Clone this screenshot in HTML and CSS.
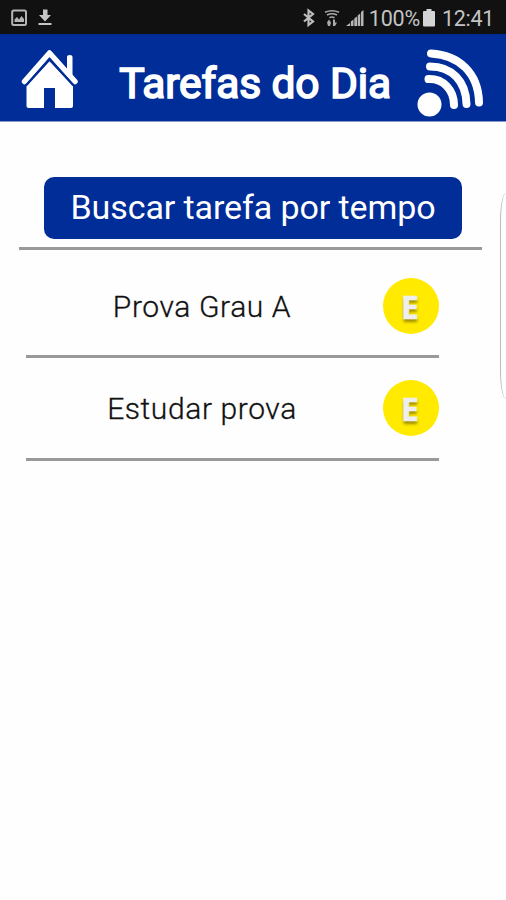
FILE: index.html
```html
<!DOCTYPE html>
<html lang="pt-BR">
<head>
    <meta charset="UTF-8">
    <title>Tarefas do Dia</title>
    <link rel="stylesheet" href="styles.css">
</head>
<body>
    <!-- Barra de status -->
    <div class="status-bar">
        <svg class="status-left" width="42" height="18" viewBox="0 0 42 18">
            <rect x="1.2" y="1.5" width="13.8" height="14.5" rx="1.5" fill="none" stroke="#b5b5b5" stroke-width="2"/>
            <path d="M3.5 13V10.5l2.5-2.500 2 2.500 2.500-3.500 2.500 3v3z" fill="#b5b5b5"/>
            <path d="M32 .5h4.500v5.500H40l-6 6.500-6-6.500h4zM27.500 14h13v2h-13z" fill="#c5c5c5"/>
        </svg>
        <div class="status-right">
            <svg width="66" height="20" viewBox="0 0 66 20">
                <path d="M1 6l9 7.500-4.500 3.500V2.500L10 6l-9 7.500" fill="none" stroke="#bdbdbd" stroke-width="2.200"/>
                <path d="M22 4.200q7-3 14 0M24 7q5-2.500 10 0M26.500 9.800q2.500-1.500 5 0" fill="none" stroke="#aaa" stroke-width="1.600"/>
                <path d="M24 14.500l2-3 2 3-1 3.500h-2zM30 11.500h2v3h2l-2 3.500h-2z" fill="#aaa"/>
                <path d="M43 18l4-3v3zM47.800 18v-4.500l2.700-2V18zM51.300 18v-7.500l2.700-2V18zM54.700 18V7.500l2.500-2V18zM58 18V4l2.500-2v16z" fill="#b5b5b5"/>
            </svg>
            <span class="battery-text">100%</span>
            <svg width="12" height="18" viewBox="0 0 12 18">
                <path d="M3.500 0h5v2H11q1 0 1 1v13.500q0 1-1 1H1q-1 0-1-1V3q0-1 1-1h2.500z" fill="#d4d4d4"/>
            </svg>
            <span class="clock">12:41</span>
        </div>
    </div>

    <header class="header">
        <svg class="home-icon" width="58" height="60" viewBox="0 0 58 60">
            <path d="M46 9v16l5.500 5.500V9q0-2-2.750-2T46 9z" fill="#fff"/>
            <path d="M3.500 33.500L28.500 5 54 33.500" fill="none" stroke="#fff" stroke-width="5.500" stroke-linecap="round" stroke-linejoin="round"/>
            <path d="M5.500 37.500L28.500 13 52 37.500V58q0 2-2 2H34V40H23v20H7.500q-2 0-2-2z" fill="#fff"/>
            <path d="M5 37.500L28.500 11.500 52.500 37.500" fill="none" stroke="#002d98" stroke-width="2.200"/>
        </svg>
        <h1 class="title">Tarefas do Dia</h1>
        <svg class="signal-icon" width="70" height="70" viewBox="0 0 70 70">
            <circle cx="13.500" cy="56.500" r="12" fill="#fff"/>
            <path d="M12.500 31c15-.5 25.500 11 25.500 26M14 18.500c22 0 36 15 36.500 37.500M15 5.500C43 7 62.500 25 63 54.500" fill="none" stroke="#fff" stroke-width="8" stroke-linecap="round"/>
        </svg>
    </header>

    <main class="content">
        <button class="search-btn">Buscar tarefa por tempo</button>
        <hr class="divider">

        <!-- Lista de tarefas -->
        <ul class="task-list">
            <li class="task">
                <span class="task-name">Prova Grau A</span>
                <span class="task-badge">E</span>
            </li>
            <li class="task">
                <span class="task-name">Estudar prova</span>
                <span class="task-badge">E</span>
            </li>
        </ul>
    </main>

    <!-- Painel lateral -->
    <div class="side-panel"></div>
</body>
</html>
```
FILE: styles.css
```css
* {
    box-sizing: border-box;
}

body {
    margin: 0;
    height: 900px;
    position: relative;
    overflow: hidden;
    background: #fefefe;
    font-family: Roboto, "Liberation Sans", sans-serif;
}

.status-bar {
    display: flex;
    justify-content: space-between;
    align-items: center;
    height: 34px;
    padding: 2px 12px 0 11px;
    background: #111;
    color: #c4c4c4;
    font-size: 21.5px;
}

.status-right {
    display: flex;
    align-items: center;
}

.battery-text {
    margin: 0 3px 0 0;
    letter-spacing: -0.2px;
}

.clock {
    margin-left: 7px;
    letter-spacing: -0.3px;
}

.header {
    display: flex;
    align-items: flex-start;
    height: 88px;
    padding: 14px 20px 0 21px;
    background: #002d98;
    border-bottom: 1px solid #8b98c8;
}

.title {
    margin: 10px 25px 0 auto;
    color: #fff;
    font-size: 42.5px;
    line-height: 52px;
    font-weight: 400;
    letter-spacing: -0.1px;
    white-space: nowrap;
    -webkit-text-stroke: 1.7px #fff;
}

.content {
    padding: 55px 24px 0 19px;
}

.search-btn {
    display: block;
    width: 418px;
    height: 62px;
    margin: 0 0 0 25px;
    padding: 0 0 2px;
    border: none;
    border-radius: 10px;
    background: #002d98;
    color: #fff;
    font-family: inherit;
    font-size: 34px;
    line-height: 60px;
    letter-spacing: -0.1px;
    white-space: nowrap;
}

.divider {
    height: 3px;
    margin: 8px 0 0;
    border: none;
    background: #999;
}

.task-list {
    width: 413px;
    margin: 5px 0 0 7px;
    padding: 0;
    list-style: none;
}

.task {
    display: flex;
    align-items: center;
    height: 103px;
    padding-top: 2px;
    border-bottom: 3px solid #999;
}

.task + .task {
    padding-top: 0;
}

.task-name {
    flex: 1;
    padding-right: 5px;
    color: #111;
    font-size: 30px;
    font-weight: 300;
    letter-spacing: 0.6px;
    text-align: center;
    -webkit-text-stroke: 0.3px #111;
}

.task-badge {
    width: 56px;
    height: 56px;
    padding-right: 2px;
    border-radius: 50%;
    background: #ffea00;
    color: #eee;
    font-family: "Open Sans", sans-serif;
    font-size: 32px;
    font-weight: 700;
    line-height: 57px;
    text-align: center;
    text-shadow: 0 3px 3px rgba(90, 80, 0, 0.6);
    -webkit-text-stroke: 0.7px #eee;
}

.side-panel {
    position: absolute;
    top: 193px;
    right: 0;
    width: 6px;
    height: 206px;
    border-left: 1px solid #bbb;
    border-radius: 6px 0 0 6px / 28px 0 0 28px;
}
```
